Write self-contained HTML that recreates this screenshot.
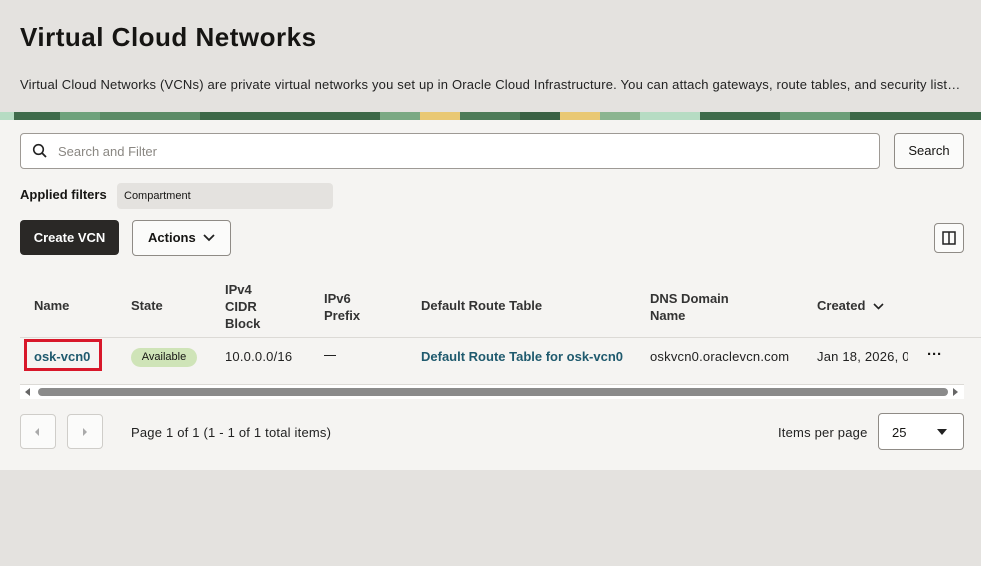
<!DOCTYPE html><html><head><style>
body{margin:0;width:981px;height:566px;background:#e4e2df;font-family:"Liberation Sans",sans-serif;color:#161513;position:relative;overflow:hidden}
.a{position:absolute}
h1{position:absolute;left:20px;top:22px;margin:0;font-size:26px;font-weight:bold;letter-spacing:0.5px}
.desc{left:20px;top:77px;font-size:13px;color:#222;white-space:nowrap;letter-spacing:0.19px}
.banner{left:0;top:112px;width:981px;height:8px;background:linear-gradient(90deg,#b6dcc3 0 14px,#3f6b4b 14px 60px,#6ea27c 60px 100px,#5b8b66 100px 200px,#3d6848 200px 380px,#7aa983 380px 420px,#e9c873 420px 460px,#4d7b58 460px 520px,#3a6144 520px 560px,#e9c873 560px 600px,#8bb590 600px 640px,#b6dcc3 640px 700px,#3f6b4b 700px 780px,#6b9e78 780px 850px,#3d6848 850px 981px)}
.main{left:0;top:120px;width:981px;height:350px;background:#f5f4f2}
.search{left:20px;top:133px;width:858px;height:34px;border:1px solid #9e9a95;border-radius:4px;background:#fff}
.btn{border:1px solid #8f8b86;border-radius:4px;background:#fbfbfa;font-size:13px;text-align:center;box-sizing:border-box}
.th{font-size:13px;font-weight:bold;color:#333}
.td{font-size:13px;color:#222;letter-spacing:0.2px}
</style></head><body>
<h1>Virtual Cloud Networks</h1>
<div class="a desc">Virtual Cloud Networks (VCNs) are private virtual networks you set up in Oracle Cloud Infrastructure. You can attach gateways, route tables, and security list…</div>
<div class="a banner"></div>
<div class="a main"></div>
<div class="a search"><svg class="a" style="left:11px;top:9px" width="16" height="16" viewBox="0 0 16 16"><circle cx="6.5" cy="6.5" r="4.8" fill="none" stroke="#222" stroke-width="1.6"/><path d="M10 10l4 4" stroke="#222" stroke-width="1.8"/></svg><span class="a" style="left:37px;top:10px;font-size:13px;color:#8a8782">Search and Filter</span></div>
<div class="a btn" style="left:894px;top:133px;width:70px;height:36px;line-height:34px">Search</div>
<div class="a" style="left:20px;top:187px;font-size:13px;font-weight:bold">Applied filters</div>
<div class="a" style="left:117px;top:183px;width:216px;height:26px;background:#e4e2df;border-radius:4px;font-size:11px;line-height:26px;padding-left:7px;box-sizing:border-box">Compartment</div>
<div class="a" style="left:20px;top:220px;width:99px;height:35px;background:#2a2826;color:#fff;border-radius:4px;font-size:13px;font-weight:bold;text-align:center;line-height:35px">Create VCN</div>
<div class="a btn" style="left:132px;top:220px;width:99px;height:36px;line-height:34px;font-weight:bold">Actions &nbsp;<svg width="12" height="8" viewBox="0 0 12 8"><path d="M1 1l5 5 5-5" fill="none" stroke="#222" stroke-width="1.8"/></svg></div>
<div class="a btn" style="left:934px;top:223px;width:30px;height:30px"><svg class="a" style="left:7px;top:7px" width="14" height="14" viewBox="0 0 14 14"><rect x="1" y="1" width="12" height="12" fill="none" stroke="#222" stroke-width="1.5"/><path d="M7 1v12" stroke="#222" stroke-width="1.5"/></svg></div>
<div class="a th" style="left:34px;top:298px">Name</div>
<div class="a th" style="left:131px;top:298px">State</div>
<div class="a th" style="left:225px;top:281px;line-height:17px">IPv4<br>CIDR<br>Block</div>
<div class="a th" style="left:324px;top:290px;line-height:17px">IPv6<br>Prefix</div>
<div class="a th" style="left:421px;top:298px">Default Route Table</div>
<div class="a th" style="left:650px;top:290px;line-height:17px">DNS Domain<br>Name</div>
<div class="a th" style="left:817px;top:298px">Created &nbsp;<svg width="11" height="7" viewBox="0 0 11 7"><path d="M1 1l4.5 4.5L10 1" fill="none" stroke="#222" stroke-width="1.6"/></svg></div>
<div class="a" style="left:20px;top:337px;width:961px;height:1px;background:#dcdad6"></div>
<div class="a" style="left:24px;top:339px;width:78px;height:32px;border:3px solid #d8172a;box-sizing:border-box"></div>
<div class="a" style="left:34px;top:349px;font-size:13px;font-weight:bold;color:#1f5a6e">osk-vcn0</div>
<div class="a" style="left:131px;top:348px;width:66px;height:19px;background:#cfe4b8;border-radius:10px;font-size:11px;text-align:center;line-height:19px">Available</div>
<div class="a td" style="left:225px;top:349px">10.0.0.0/16</div>
<div class="a" style="left:324px;top:355px;width:12px;height:1px;background:#222"></div>
<div class="a" style="left:421px;top:349px;font-size:13px;font-weight:bold;color:#1f5a6e">Default Route Table for osk-vcn0</div>
<div class="a td" style="left:650px;top:349px">oskvcn0.oraclevcn.com</div>
<div class="a td" style="left:817px;top:349px;width:91px;overflow:hidden;white-space:nowrap">Jan 18, 2026, 0</div>
<div class="a" style="left:927px;top:346px;font-size:15px;font-weight:bold">···</div>
<div class="a" style="left:20px;top:384px;width:944px;height:1px;background:#dcdad6"></div>
<div class="a" style="left:20px;top:385px;width:944px;height:14px;background:#fff"></div>
<div class="a" style="left:25px;top:388px;width:0;height:0;border-top:4px solid transparent;border-bottom:4px solid transparent;border-right:5px solid #666"></div>
<div class="a" style="left:38px;top:388px;width:910px;height:8px;background:#8b8b8b;border-radius:4px"></div>
<div class="a" style="left:953px;top:388px;width:0;height:0;border-top:4px solid transparent;border-bottom:4px solid transparent;border-left:5px solid #666"></div>
<div class="a btn" style="left:20px;top:414px;width:36px;height:35px;border-color:#cfcdc9"><div class="a" style="left:14px;top:13px;border-top:4px solid transparent;border-bottom:4px solid transparent;border-right:4px solid #aaa"></div></div>
<div class="a btn" style="left:67px;top:414px;width:36px;height:35px;border-color:#cfcdc9"><div class="a" style="left:15px;top:13px;border-top:4px solid transparent;border-bottom:4px solid transparent;border-left:4px solid #aaa"></div></div>
<div class="a td" style="left:131px;top:425px">Page 1 of 1 (1 - 1 of 1 total items)</div>
<div class="a td" style="left:778px;top:425px">Items per page</div>
<div class="a btn" style="left:878px;top:413px;width:86px;height:37px;background:#fff;text-align:left"><span class="a" style="left:13px;top:11px">25</span><svg class="a" style="left:58px;top:15px" width="10" height="6"><path d="M0 0h10L5 6z" fill="#222"/></svg></div>
</body></html>
